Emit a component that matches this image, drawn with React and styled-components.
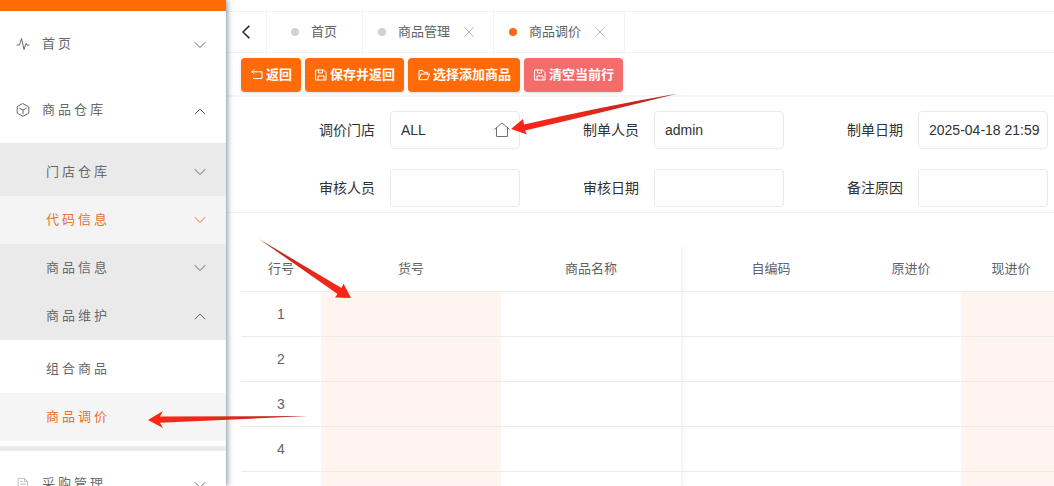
import React, { useState } from "react";
import styled, { createGlobalStyle, css } from "styled-components";

const GlobalStyle = createGlobalStyle`
  * {
    box-sizing: border-box;
  }

  body {
    margin: 0;
    background: #fff;
    color: #606266;
    font-family: "Liberation Sans", "Noto Sans CJK SC", sans-serif;
    font-size: 13px;
    line-height: 20px;
  }

  button, input {
    font-family: inherit;
    line-height: inherit;
  }
`;

const Layout = styled.div`
  position: relative;
  display: flex;
  height: 100vh;
  overflow: hidden;
`;

const Sidebar = styled.aside`
  flex: 0 0 226px;
  overflow: hidden;
  background: #fff;
`;

const SidebarShadow = styled.div`
  position: relative;
  z-index: 1;
  display: flex;
  box-shadow: 1px 0 6px rgba(0, 21, 41, 0.5);
`;

const BrandBar = styled.div`
  height: 11px;
  background: #ff6b08;
`;

const MenuButton = styled.button`
  display: flex;
  align-items: center;
  width: 100%;
  height: 48px;
  padding: 0 20px 0 46px;
  border: 0;
  background: ${props => (props.$active ? props.$activeBg : "transparent")};
  color: ${props => (props.$active ? "#e8702f" : "#66686b")};
  font-size: 13px;
  letter-spacing: 3px;
  text-align: left;
  cursor: pointer;

  span {
    flex: 1;
  }

  ${props =>
    props.$top &&
    css`
      height: 66px;
      padding-left: 16px;

      span {
        margin-left: 12px;
      }

      span + svg {
        margin-top: 2px;
      }
    `};
`;

const SubMenu = styled.div`
  padding: 5px 0;
  background: #eaeaea;
`;

const LeafMenu = styled.div`
  padding: 5px 0;
  background: #fff;
`;

const Main = styled.main`
  flex: 1;
  min-width: 0;
  padding-top: 11px;
`;

const TabBar = styled.nav`
  display: flex;
  height: 42px;
  border-top: 1px solid #f2f2f2;
  border-bottom: 1px solid #f2f2f2;
`;

const BackButton = styled.button`
  display: flex;
  align-items: center;
  justify-content: center;
  width: 41px;
  padding: 0;
  border: 0;
  border-right: 1px solid #f2f2f2;
  background: none;
  color: #303133;
`;

const Tab = styled.div`
  display: flex;
  align-items: center;
  padding: ${props => (props.$closable ? "0 14px 0 15px" : "0 25px 0 24px")};
  border-right: 1px solid #f2f2f2;
`;

const TabLink = styled.a`
  display: flex;
  align-items: center;
  gap: 12px;
  color: #606266;
  text-decoration: none;

  &::before {
    content: "";
    width: 8px;
    height: 8px;
    border-radius: 50%;
    background: ${props => (props.$active ? "#f56c14" : "#d2d2d2")};
  }
`;

const CloseButton = styled.button`
  display: flex;
  align-items: center;
  justify-content: center;
  width: 20px;
  height: 20px;
  margin-left: 9px;
  padding: 0;
  border: 0;
  background: none;
  color: #b8b8b8;
`;

const Toolbar = styled.div`
  display: flex;
  gap: 4px;
  padding: 5px 15px 3px;
  border-bottom: 2px solid #f6f6f6;
`;

const ActionButton = styled.button`
  display: flex;
  align-items: center;
  gap: 3px;
  height: 34px;
  padding: 0 9px 0 10px;
  border: 0;
  border-radius: 4px;
  background: ${props => (props.$danger ? "#f56c6c" : "#ff6b08")};
  box-shadow: 0 1px 3px rgba(0, 0, 0, 0.15);
  color: #fff;
  font-size: 13px;
  font-weight: bold;
  white-space: nowrap;
  cursor: pointer;
`;

const FilterForm = styled.form`
  display: grid;
  grid-template-columns: repeat(3, 1fr);
  row-gap: 20px;
  padding: 14px 6px 5px 30px;
  border-bottom: 1px solid #f2f2f2;
`;

const Field = styled.div`
  display: flex;
  align-items: center;
  justify-content: flex-end;
  gap: 15px;
  color: #303133;
  font-size: 14px;

  label {
    white-space: nowrap;
  }
`;

const InputWrapper = styled.div`
  position: relative;
  flex: 0 0 130px;
`;

const Input = styled.input`
  display: block;
  width: 100%;
  height: 38px;
  padding: 0 0 0 10px;
  border: 1px solid #eaeaea;
  border-radius: 4px;
  outline: 0;
  background: #fff;
  color: #303133;
  font-size: 14px;
`;

const PickerButton = styled.button`
  position: absolute;
  top: 0;
  right: 10px;
  display: flex;
  align-items: center;
  height: 100%;
  padding: 0;
  border: 0;
  background: none;
  color: #707276;
`;

const TableWrapper = styled.div`
  margin: 34px 0 0 15px;
  overflow: hidden;
`;

const Table = styled.table`
  width: 100%;
  min-width: 820px;
  table-layout: fixed;
  border-collapse: separate;
  border-spacing: 0;
  text-align: center;
`;

const cell = css`
  height: 45px;
  padding: 0;
  border-bottom: 1px solid #ebebeb;
  background: ${props => (props.$editable ? "#fff5ee" : "#fff")};
  ${props =>
    props.$afterFixed &&
    css`
      background: linear-gradient(to right, #f3f3f3, #fff 5px);
    `};
`;

const HeadCell = styled.th`
  ${cell};
  width: ${props => props.$width}px;
  color: #606266;
  font-size: 13px;
  font-weight: normal;
`;

const Cell = styled.td`
  ${cell};
  font-size: 14px;
`;

const ArrowLayer = styled.svg`
  position: absolute;
  z-index: 2;
  top: 0;
  left: 0;
  width: 100%;
  height: 100%;
  pointer-events: none;
`;

const Icon = ({ size = 14, width = 1, box = 14, children }) => (
  <svg
    width={size}
    height={size}
    viewBox={`0 0 ${box} ${box}`}
    fill="none"
    stroke="currentColor"
    strokeWidth={width}
    strokeLinecap="round"
    strokeLinejoin="round"
    aria-hidden="true"
  >
    {children}
  </svg>
);

const Chevron = ({ up }) => (
  <Icon size={12} box={12}>
    <path d={up ? "M1 9l5-5 5 5" : "M1 3.500l5 5 5-5"} />
  </Icon>
);

const PulseIcon = () => (
  <Icon>
    <path d="M1 8h2.500L5.500 1.500 8 12.500l2-6 1 1.500h2" />
  </Icon>
);

const BoxIcon = () => (
  <Icon>
    <path d="M7 .7l5.800 3.200v6.200L7 13.300l-5.800-3.200V3.900zM3.500 5.200L7 7.100l3.500-1.900M7 7.100v3.600" />
  </Icon>
);

const DocIcon = () => (
  <Icon>
    <g stroke="#c0c0c0">
      <path d="M2.500 1.500h6l3 3v8h-9zM8.500 1.500v3h3M4.500 4.500h2M4.500 7h5M4.500 9.500h5" />
    </g>
  </Icon>
);

const ReturnIcon = () => (
  <Icon size={12} box={12}>
    <path d="M3 .8L1 2.800l2 2M1 2.800h10v6.700H2.500" />
  </Icon>
);

const SaveIcon = () => (
  <Icon size={12} box={12}>
    <path d="M1 1h7.500L11 3.500V11H1zM3.500 1v3h4V1M3 11V7h6v4" />
  </Icon>
);

const FolderIcon = () => (
  <Icon size={12} box={12}>
    <path d="M1 10V1.500h3.500L6 3.300h3.500V5M1 10.300L3 5h8.500l-2 5.300z" />
  </Icon>
);

const HouseIcon = () => (
  <Icon size={16} box={16}>
    <path d="M.6 7.200L8 1l7.400 6.200M2.500 6v8.500h11V6" />
  </Icon>
);

const leafItems = ["组合商品", "商品调价"];

const subItems = [
  { name: "门店仓库" },
  { name: "代码信息", active: true },
  { name: "商品信息" },
  { name: "商品维护", open: true }
];

const tabs = [
  { name: "首页" },
  { name: "商品管理", closable: true },
  { name: "商品调价", closable: true, active: true }
];

const actions = [
  { name: "返回", icon: <ReturnIcon /> },
  { name: "保存并返回", icon: <SaveIcon /> },
  { name: "选择添加商品", icon: <FolderIcon /> },
  { name: "清空当前行", icon: <SaveIcon />, danger: true }
];

const fields = [
  { key: "store", label: "调价门店", picker: true },
  { key: "creator", label: "制单人员" },
  { key: "createdAt", label: "制单日期" },
  { key: "auditor", label: "审核人员" },
  { key: "auditedAt", label: "审核日期" },
  { key: "reason", label: "备注原因" }
];

const columns = [
  { name: "行号", width: 80 },
  { name: "货号", width: 180, editable: true },
  { name: "商品名称", width: 180 },
  { name: "自编码", width: 180, afterFixed: true },
  { name: "原进价", width: 100 },
  { name: "现进价", width: 100, editable: true }
];

// the last row is a blank one, ready for a new entry
const rows = ["1", "2", "3", "4", ""];

const arrows = [
  {
    id: "store",
    tail: [678, 93],
    tip: [511, 129],
    d: "M511 129L523 119 524 124.500Q600 107 678 93.500Q600 113 525 130.500L527 134.500z"
  },
  {
    id: "code",
    tail: [259, 239],
    tip: [351, 298],
    d: "M351 298L343.500 283.500 341.500 288 259 239 337.500 294 335 297.500z"
  },
  {
    id: "menu",
    tail: [308, 416],
    tip: [148, 420],
    d: "M148 420L163 411 160 416.500 308 416 160 422.800 163 428z"
  }
];

const SideMenu = () => (
  <Sidebar>
    <BrandBar />
    <MenuButton $top>
      <PulseIcon />
      <span>首页</span>
      <Chevron />
    </MenuButton>
    <MenuButton $top>
      <BoxIcon />
      <span>商品仓库</span>
      <Chevron up />
    </MenuButton>
    <SubMenu>
      {subItems.map(item => (
        <React.Fragment key={item.name}>
          <MenuButton $active={item.active} $activeBg="#f4f4f4">
            <span>{item.name}</span>
            <Chevron up={item.open} />
          </MenuButton>
          {item.open && (
            <LeafMenu>
              {leafItems.map(name => (
                <MenuButton
                  key={name}
                  $active={name === "商品调价"}
                  $activeBg="#f5f5f5"
                >
                  <span>{name}</span>
                </MenuButton>
              ))}
            </LeafMenu>
          )}
        </React.Fragment>
      ))}
    </SubMenu>
    <MenuButton $top>
      <DocIcon />
      <span>采购管理</span>
      <Chevron />
    </MenuButton>
  </Sidebar>
);

const Filters = () => {
  const [values, setValues] = useState({
    store: "ALL",
    creator: "admin",
    createdAt: "2025-04-18 21:59"
  });

  return (
    <FilterForm onSubmit={e => e.preventDefault()}>
      {fields.map(({ key, label, picker }) => (
        <Field key={key}>
          <label htmlFor={key}>{label}</label>
          <InputWrapper>
            <Input
              id={key}
              value={values[key] || ""}
              onChange={e => setValues({ ...values, [key]: e.target.value })}
            />
            {picker && (
              <PickerButton type="button" aria-label={label}>
                <HouseIcon />
              </PickerButton>
            )}
          </InputWrapper>
        </Field>
      ))}
    </FilterForm>
  );
};

const PriceTable = () => (
  <TableWrapper>
    <Table>
      <thead>
        <tr>
          {columns.map(col => (
            <HeadCell
              key={col.name}
              $width={col.width}
              $afterFixed={col.afterFixed}
            >
              {col.name}
            </HeadCell>
          ))}
        </tr>
      </thead>
      <tbody>
        {rows.map(row => (
          <tr key={row}>
            {columns.map((col, idx) => (
              <Cell
                key={col.name}
                $editable={col.editable}
                $afterFixed={col.afterFixed}
              >
                {idx === 0 && row}
              </Cell>
            ))}
          </tr>
        ))}
      </tbody>
    </Table>
  </TableWrapper>
);

const Arrows = () => (
  <ArrowLayer aria-hidden="true">
    {arrows.map(({ id, tail, tip, d }) => (
      <g key={id}>
        <linearGradient
          id={`arrow-${id}`}
          gradientUnits="userSpaceOnUse"
          x1={tail[0]}
          y1={tail[1]}
          x2={tip[0]}
          y2={tip[1]}
        >
          <stop offset="0" stopColor="#a8281f" />
          <stop offset="0.6" stopColor="#e8281c" />
          <stop offset="1" stopColor="#ff2418" />
        </linearGradient>
        <path d={d} fill={`url(#arrow-${id})`} />
      </g>
    ))}
  </ArrowLayer>
);

export default function App() {
  return (
    <Layout>
      <GlobalStyle />
      <SidebarShadow>
        <SideMenu />
      </SidebarShadow>
      <Main>
        <TabBar>
          <BackButton aria-label="后退">
            <Icon size={14} width={1.6}>
              <path d="M10 1.200L4 7l6 5.800" />
            </Icon>
          </BackButton>
          {tabs.map(tab => (
            <Tab key={tab.name} $closable={tab.closable}>
              <TabLink href="#" $active={tab.active}>
                {tab.name}
              </TabLink>
              {tab.closable && (
                <CloseButton aria-label="关闭">
                  <Icon size={10} box={10}>
                    <path d="M.5.5l9 9M9.500.5l-9 9" />
                  </Icon>
                </CloseButton>
              )}
            </Tab>
          ))}
        </TabBar>
        <Toolbar>
          {actions.map(action => (
            <ActionButton key={action.name} $danger={action.danger}>
              {action.icon}
              {action.name}
            </ActionButton>
          ))}
        </Toolbar>
        <Filters />
        <PriceTable />
      </Main>
      <Arrows />
    </Layout>
  );
}
